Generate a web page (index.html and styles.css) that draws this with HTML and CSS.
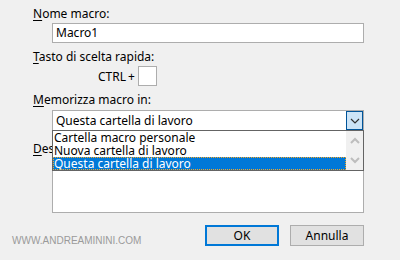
FILE: index.html
```html
<!DOCTYPE html>
<html lang="it">
<head>
<meta charset="utf-8">
<title>Registra macro</title>
<link rel="stylesheet" href="styles.css">
</head>
<body>
<div class="dialog">
  <div class="label"><u>N</u>ome macro:</div>
  <div class="textbox">Macro1</div>

  <div class="label label-gap"><u>T</u>asto di scelta rapida:</div>
  <div class="shortcut">
    <span class="ctrl">CTRL</span><span class="plus">+</span>
    <span class="keybox"></span>
  </div>

  <div class="label label-gap2"><u>M</u>emorizza macro in:</div>
  <div class="combo-wrap">
    <div class="combo">
      <span class="combo-text">Questa cartella di lavoro</span>
      <span class="combo-btn">
        <svg width="10" height="6" viewBox="0 0 10 6"><path d="M1 1 L5 5 L9 1" fill="none" stroke="#333" stroke-width="1.2"/></svg>
      </span>
    </div>
    <div class="dropdown">
      <div class="items">
        <div class="item">Cartella macro personale</div>
        <div class="item">Nuova cartella di lavoro</div>
        <div class="item selected">Questa cartella di lavoro</div>
      </div>
      <div class="scrollbar">
        <svg width="10" height="7" viewBox="0 0 10 7"><path d="M1 6 L5 2 L9 6" fill="none" stroke="#bdbdbd" stroke-width="2"/></svg>
        <svg width="10" height="7" viewBox="0 0 10 7"><path d="M1 1 L5 5 L9 1" fill="none" stroke="#bdbdbd" stroke-width="2"/></svg>
      </div>
    </div>
  </div>

  <div class="label label-desc"><u>D</u>escrizione:</div>
  <div class="textarea"></div>

  <div class="footer">
    <span class="watermark">WWW.ANDREAMININI.COM</span>
    <div class="buttons">
      <button class="btn btn-default">OK</button>
      <button class="btn">Annulla</button>
    </div>
  </div>
</div>
</body>
</html>
```

FILE: styles.css
```css
html, body {
  margin: 0;
  padding: 0;
  background: #f0f0f0;
}
body {
  width: 400px;
  height: 260px;
  overflow: hidden;
  font-family: "Noto Sans", "Liberation Sans", sans-serif;
  font-size: 12px;
  color: #000;
}
.dialog {
  padding: 6px 0 0 33px;
  display: flex;
  flex-direction: column;
}
.label {
  line-height: 16px;
  height: 16px;
  white-space: nowrap;
}
.label u {
  text-decoration-thickness: 1px;
  text-underline-offset: 2px;
}
.textbox {
  margin: 1px 0 0 19px;
  height: 18px;
  border: 1px solid #adadad;
  background: #fff;
  line-height: 18px;
  padding-left: 3px;
  width: 307px;
}
.label-gap { margin-top: 6px; }
.shortcut {
  display: flex;
  align-items: center;
  margin: 1px 0 0 65px;
  height: 20px;
}
.plus {
  margin-left: 2px;
  margin-right: 3px;
}
.keybox {
  width: 17px;
  height: 18px;
  border: 1px solid #adadad;
  background: #fff;
}
.label-gap2 { margin-top: 6px; }
.combo-wrap {
  position: relative;
  margin: 2px 0 0 19px;
  width: 312px;
}
.combo {
  height: 19px;
  border: 1px solid #adadad;
  border-bottom: none;
  background: #fff;
  display: flex;
  align-items: center;
  justify-content: space-between;
}
.combo-text {
  padding-left: 3px;
}
.combo-btn {
  width: 15px;
  height: 17px;
  background: #cce4f7;
  border: 1px solid #005499;
  display: flex;
  align-items: center;
  justify-content: center;
  align-self: flex-start;
}
.dropdown {
  position: absolute;
  top: 20px;
  left: 0;
  width: 310px;
  height: 39px;
  border: 1px solid #646464;
  background: #fff;
  display: flex;
  z-index: 2;
}
.items {
  flex: 1;
  display: flex;
  flex-direction: column;
}
.item {
  height: 13px;
  line-height: 13px;
  padding-left: 1px;
  white-space: nowrap;
}
.item.selected {
  background: #0078d7;
  color: #fff;
  outline: 1px dotted #f5a623;
  outline-offset: -1px;
}
.scrollbar {
  width: 17px;
  background: #f0f0f0;
  display: flex;
  flex-direction: column;
  align-items: center;
  justify-content: space-between;
  padding: 6px 0 6px;
}
.label-desc {
  margin-top: 11px;
  width: 19px;
  overflow: hidden;
}
.textarea {
  margin: 1px 0 0 19px;
  width: 310px;
  height: 53px;
  border: 1px solid #adadad;
  background: #fff;
}
.footer {
  display: flex;
  justify-content: space-between;
  align-items: flex-end;
  margin: 12px 0 0 -21px;
  width: 352px;
}
.watermark {
  font-family: "Liberation Sans", Arial, sans-serif;
  font-size: 10px;
  color: #9a9a9a;
  line-height: 12px;
  margin-bottom: -1px;
}
.buttons {
  display: flex;
  gap: 11px;
}
.btn {
  font-family: inherit;
  font-size: 12px;
  color: #000;
  background: #e1e1e1;
  border: 1px solid #adadad;
  width: 74px;
  height: 21px;
  padding: 0;
  margin: 0;
}
.btn-default {
  border: 2px solid #0078d7;
}
```
